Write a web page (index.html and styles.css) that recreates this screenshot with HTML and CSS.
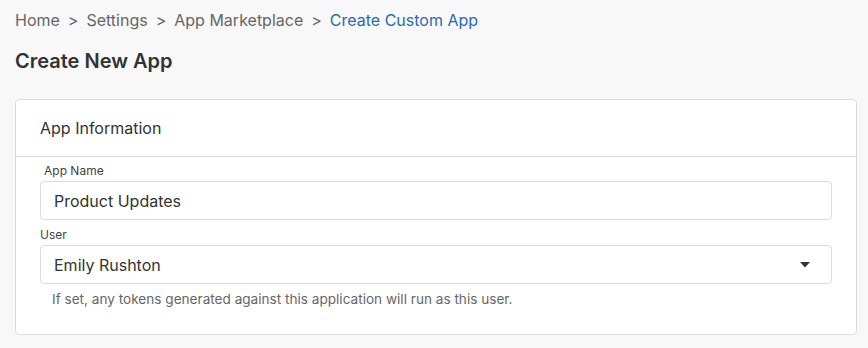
FILE: index.html
```html
<!DOCTYPE html>
<html>
<head>
<meta charset="utf-8">
<link rel="stylesheet" href="styles.css">
</head>
<body>
<div class="page">
  <nav class="crumbs">
    <span class="crumb">Home</span><span class="sep">&gt;</span>
    <span class="crumb">Settings</span><span class="sep">&gt;</span>
    <span class="crumb">App Marketplace</span><span class="sep">&gt;</span>
    <span class="crumb current">Create Custom App</span>
  </nav>
  <h1 class="title">Create New App</h1>
  <section class="card">
    <div class="card-header">App Information</div>
    <div class="card-body">
      <div class="field">
        <label class="label label-indent">App Name</label>
        <div class="input">Product Updates</div>
      </div>
      <div class="field">
        <label class="label">User</label>
        <div class="input select">
          <span>Emily Rushton</span>
          <svg class="caret" width="10" height="6" viewBox="0 0 10 6"><path d="M0 0 H10 L5 5.5 Z" fill="#333"/></svg>
        </div>
        <div class="help">If set, any tokens generated against this application will run as this user.</div>
      </div>
    </div>
  </section>
</div>
</body>
</html>
```
FILE: styles.css
```css
html, body {
  margin: 0;
  padding: 0;
  background: #f8f8f8;
  font-family: Inter, "Noto Sans", sans-serif;
  color: #333;
}
.page {
  padding: 9px 11px 0 15px;
}
.crumbs {
  display: flex;
  align-items: center;
  gap: 8px;
  font-size: 16px;
  line-height: 22px;
  color: #666;
}
.current {
  color: #2d69b0;
}
.title {
  margin: 17px 0 0;
  font-size: 20px;
  line-height: 26px;
  font-weight: 600;
  color: #333;
}
.card {
  margin-top: 25px;
  background: #fff;
  border: 1px solid #dcdcdc;
  border-radius: 4px;
}
.card-header {
  height: 56px;
  display: flex;
  align-items: center;
  padding: 0 24px;
  font-size: 16px;
  color: #333;
  border-bottom: 1px solid #dcdcdc;
}
.card-body {
  padding: 5px 24px 26px;
  display: flex;
  flex-direction: column;
  gap: 6px;
}
.field {
  display: flex;
  flex-direction: column;
}
.label {
  font-size: 12px;
  line-height: 18px;
  color: #444;
  margin-bottom: 1px;
}
.label-indent {
  padding-left: 4px;
}
.input {
  height: 37px;
  border: 1px solid #dcdcdc;
  border-radius: 4px;
  display: flex;
  align-items: center;
  padding: 0 13px;
  font-size: 16px;
  color: #333;
}
.select {
  justify-content: space-between;
  padding-right: 21px;
}
.caret {
  display: block;
}
.help {
  margin-top: 6px;
  padding-left: 12px;
  font-size: 13.6px;
  line-height: 18px;
  color: #666;
}
```
